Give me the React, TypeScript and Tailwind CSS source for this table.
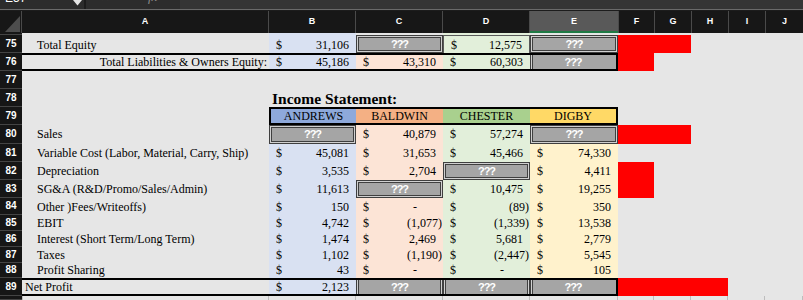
import React from 'react';

const BL = 'bg-[#d9e1f2]';
const PE = 'bg-[#fce4d6]';
const GR = 'bg-[#e2efda]';
const YE = 'bg-[#fff2cc]';
const THICK = 'border-y-2 border-black';

const Q_ALL = 'shadow-[inset_0_0_0_1px_#3f3f3f,inset_0_0_0_2px_#d0d0d0,inset_0_0_0_3px_#3f3f3f]';
const Q_X = 'shadow-[inset_1px_0_0_#3f3f3f,inset_2px_0_0_#d0d0d0,inset_3px_0_0_#3f3f3f,inset_-1px_0_0_#3f3f3f,inset_-2px_0_0_#d0d0d0,inset_-3px_0_0_#3f3f3f]';
const Q_L = 'shadow-[inset_1px_0_0_#3f3f3f,inset_2px_0_0_#d0d0d0,inset_3px_0_0_#3f3f3f]';

function RN({ n }: { n?: string }) {
  return (
    <div className="flex items-center justify-center overflow-hidden bg-[#161616] border-b border-[#444] text-[10px] font-bold text-white font-['Liberation_Sans',Arial,sans-serif] leading-none">
      {n}
    </div>
  );
}

function E({ x = '' }: { x?: string }) {
  return <div className={x} />;
}

function Lbl({ t, pb = 'pb-[2px]', x = 'pl-[15px]' }: { t: string; pb?: string; x?: string }) {
  return <div className={`flex items-end whitespace-nowrap leading-[14px] ${pb} ${x}`}>{t}</div>;
}

function Acc({ v, bg = '', pb = 'pb-[2px]', x = '' }: { v: string; bg?: string; pb?: string; x?: string }) {
  const pr = v.startsWith('(') ? 'pr-[1px]' : v === '-' ? 'pr-[26px]' : 'pr-[7px]';
  return (
    <div className={`flex items-end justify-between pl-[7px] leading-[14px] whitespace-nowrap ${bg} ${pb} ${x}`}>
      <span>$</span>
      <span className={pr}>{v}</span>
    </div>
  );
}

function Q({ s = Q_ALL, x = '' }: { s?: string; x?: string }) {
  return (
    <div
      className={`flex items-center justify-center bg-[#a5a5a5] text-white font-bold text-[11px] tracking-[-1px] leading-none font-['Liberation_Sans',Arial,sans-serif] ${s} ${x}`}
    >
      ???
    </div>
  );
}

function Red({ x = '' }: { x?: string }) {
  return <div className={`bg-[#ff0000] ${x}`} />;
}

function Empties({ n }: { n: number }) {
  return (
    <>
      {Array.from({ length: n }).map((_, i) => (
        <div key={i} />
      ))}
    </>
  );
}

export default function App() {
  return (
    <div className="w-[803px] h-[300px] overflow-hidden bg-[#e6e6e6] text-black">
      {/* formula bar (cut off) */}
      <div className="h-[9px] flex overflow-hidden bg-[#2c2c2c] font-['Liberation_Sans',Arial,sans-serif]">
        <div className="w-[84px] flex items-start justify-between pl-[5px] pr-[2px]">
          <span className="-mt-[8px] text-[12px] leading-[12px] text-white">E57</span>
          <svg width="9" height="6" viewBox="0 0 9 6" className="mt-0">
            <path d="M0 0 L9 0 L4.5 5.5 Z" fill="#e5e5e5" />
          </svg>
        </div>
        <div className="w-[2px] bg-[#1c1c1c]" />
        <div className="w-[94px] flex items-start gap-[14px] pl-[14px] text-[#8a8a8a]">
          <span className="-mt-[9px] text-[12px] leading-[12px]">✕</span>
          <span className="-mt-[9px] text-[12px] leading-[12px]">✓</span>
          <span className="-mt-[9px] text-[13px] leading-[12px] italic font-['Liberation_Serif',serif]">fx</span>
        </div>
        <div className="flex-1 bg-[#353535]" />
      </div>
      <div className="h-[1px] bg-[#6a6a6a]" />
      <div className="h-[1px] bg-[#1c1c1c]" />

      {/* column headers */}
      <div className="h-[22px] grid grid-cols-[22px_247px_87px_87px_87px_88px_36px_37px_37px_37px_38px] bg-[#171717] text-white text-[9px] font-bold font-['Liberation_Sans',Arial,sans-serif]">
        <div className="flex items-end justify-end border-r border-[#4a4a4a] pb-[1px] pr-[1px]">
          <svg width="15" height="16" viewBox="0 0 15 16">
            <path d="M0 16 L15 16 L15 0 Z" fill="#4d4d4d" />
          </svg>
        </div>
        {['A', 'B', 'C', 'D'].map((c) => (
          <div key={c} className="flex items-center justify-center border-r border-[#4a4a4a]">
            {c}
          </div>
        ))}
        <div className="flex items-center justify-center bg-[#595959] border-b-2 border-[#1f7a45] pt-[2px]">E</div>
        {['F', 'G', 'H', 'I', 'J'].map((c) => (
          <div key={c} className="flex items-center justify-center border-l border-[#4a4a4a]">
            {c}
          </div>
        ))}
      </div>

      {/* sheet body */}
      <div className="grid grid-cols-[22px_247px_87px_87px_87px_88px_36px_37px_37px_37px_38px] grid-rows-[2px_18px_18px_18px_18px_18px_19px_18px_18px_18px_17px_16px_16px_16px_15px_18px_4px] text-[12px] font-['Liberation_Serif','Times_New_Roman',serif]">
        {/* 74 sliver */}
        <RN />
        <E />
        <E x={BL} />
        <E />
        <E x={GR} />
        <E />
        <Empties n={5} />

        {/* 75 */}
        <RN n="75" />
        <Lbl t="Total Equity" pb="pb-[1px]" />
        <Acc v="31,106" bg={BL} pb="pb-[1px]" />
        <Q />
        <Acc v="12,575" bg={GR} pb="pb-[1px]" x="border-x border-t border-[#595959]" />
        <Q />
        <Red x="col-span-2" />
        <Empties n={3} />

        {/* 76 */}
        <RN n="76" />
        <Lbl t="Total Liabilities & Owners Equity:" pb="pb-0" x={`justify-end pr-[2px] ${THICK}`} />
        <Acc v="45,186" bg={BL} pb="pb-0" x={THICK} />
        <Acc v="43,310" bg={PE} pb="pb-0" x={THICK} />
        <Acc v="60,303" bg={GR} pb="pb-0" x={THICK} />
        <Q s={Q_L} x={`${THICK} border-r-2`} />
        <Red />
        <Empties n={4} />

        {/* 77 */}
        <RN n="77" />
        <Empties n={10} />

        {/* 78 */}
        <RN n="78" />
        <E />
        <div className="col-span-4 flex items-end whitespace-nowrap pl-[3px] pb-[1px] text-[15.5px] leading-none font-bold">
          Income Statement:
        </div>
        <Empties n={5} />

        {/* 79 */}
        <RN n="79" />
        <E />
        <div className="col-span-4 grid grid-cols-[85px_87px_87px_86px] border-2 border-black leading-none">
          <div className="flex items-center justify-center bg-[#8ea9db]">ANDREWS</div>
          <div className="flex items-center justify-center bg-[#f4b084]">BALDWIN</div>
          <div className="flex items-center justify-center bg-[#a9d08e]">CHESTER</div>
          <div className="flex items-center justify-center bg-[#ffd966]">DIGBY</div>
        </div>
        <Empties n={5} />

        {/* 80 */}
        <RN n="80" />
        <Lbl t="Sales" pb="pb-[3px]" />
        <Q />
        <Acc v="40,879" bg={PE} pb="pb-[3px]" />
        <Acc v="57,274" bg={GR} pb="pb-[3px]" />
        <Q />
        <Red x="col-span-2" />
        <Empties n={3} />

        {/* 81 */}
        <RN n="81" />
        <Lbl t="Variable Cost (Labor, Material, Carry, Ship)" />
        <Acc v="45,081" bg={BL} />
        <Acc v="31,653" bg={PE} />
        <Acc v="45,466" bg={GR} />
        <Acc v="74,330" bg={YE} />
        <Empties n={5} />

        {/* 82 */}
        <RN n="82" />
        <Lbl t="Depreciation" />
        <Acc v="3,535" bg={BL} />
        <Acc v="2,704" bg={PE} />
        <Q />
        <Acc v="4,411" bg={YE} />
        <Red />
        <Empties n={4} />

        {/* 83 */}
        <RN n="83" />
        <Lbl t="SG&A (R&D/Promo/Sales/Admin)" />
        <Acc v="11,613" bg={BL} />
        <Q />
        <Acc v="10,475" bg={GR} />
        <Acc v="19,255" bg={YE} />
        <Red />
        <Empties n={4} />

        {/* 84 */}
        <RN n="84" />
        <Lbl t="Other )Fees/Writeoffs)" pb="pb-[1px]" />
        <Acc v="150" bg={BL} pb="pb-[1px]" />
        <Acc v="-" bg={PE} pb="pb-[1px]" />
        <Acc v="(89)" bg={GR} pb="pb-[1px]" />
        <Acc v="350" bg={YE} pb="pb-[1px]" />
        <Empties n={5} />

        {/* 85 */}
        <RN n="85" />
        <Lbl t="EBIT" pb="pb-[1px]" />
        <Acc v="4,742" bg={BL} pb="pb-[1px]" />
        <Acc v="(1,077)" bg={PE} pb="pb-[1px]" />
        <Acc v="(1,339)" bg={GR} pb="pb-[1px]" />
        <Acc v="13,538" bg={YE} pb="pb-[1px]" />
        <Empties n={5} />

        {/* 86 */}
        <RN n="86" />
        <Lbl t="Interest (Short Term/Long Term)" pb="pb-[1px]" />
        <Acc v="1,474" bg={BL} pb="pb-[1px]" />
        <Acc v="2,469" bg={PE} pb="pb-[1px]" />
        <Acc v="5,681" bg={GR} pb="pb-[1px]" />
        <Acc v="2,779" bg={YE} pb="pb-[1px]" />
        <Empties n={5} />

        {/* 87 */}
        <RN n="87" />
        <Lbl t="Taxes" pb="pb-[1px]" />
        <Acc v="1,102" bg={BL} pb="pb-[1px]" />
        <Acc v="(1,190)" bg={PE} pb="pb-[1px]" />
        <Acc v="(2,447)" bg={GR} pb="pb-[1px]" />
        <Acc v="5,545" bg={YE} pb="pb-[1px]" />
        <Empties n={5} />

        {/* 88 */}
        <RN n="88" />
        <Lbl t="Profit Sharing" pb="pb-[1px]" />
        <Acc v="43" bg={BL} pb="pb-[1px]" />
        <Acc v="-" bg={PE} pb="pb-[1px]" />
        <Acc v="-" bg={GR} pb="pb-[1px]" />
        <Acc v="105" bg={YE} pb="pb-[1px]" />
        <Empties n={5} />

        {/* 89 */}
        <RN n="89" />
        <Lbl t="Net Profit" pb="pb-0" x={`pl-[3px] ${THICK}`} />
        <Acc v="2,123" bg={BL} pb="pb-0" x={THICK} />
        <Q s={Q_X} x={THICK} />
        <Q s={Q_X} x={THICK} />
        <Q s={Q_L} x={`${THICK} border-r-2`} />
        <Red x="col-span-3" />
        <Empties n={2} />

        {/* 90 */}
        <RN />
        <E x="border-x border-[#bdbdbd]" />
        <E x="border-r border-[#bdbdbd]" />
        <E x="border-r border-[#bdbdbd]" />
        <E x="border-r border-[#bdbdbd]" />
        <E x="border-r border-[#bdbdbd]" />
        <E x="border-r border-[#bdbdbd]" />
        <E x="border-r border-[#bdbdbd]" />
        <E x="border-r border-[#bdbdbd]" />
        <E x="border-r border-[#bdbdbd]" />
        <E x="border-r border-[#bdbdbd]" />
      </div>
    </div>
  );
}
